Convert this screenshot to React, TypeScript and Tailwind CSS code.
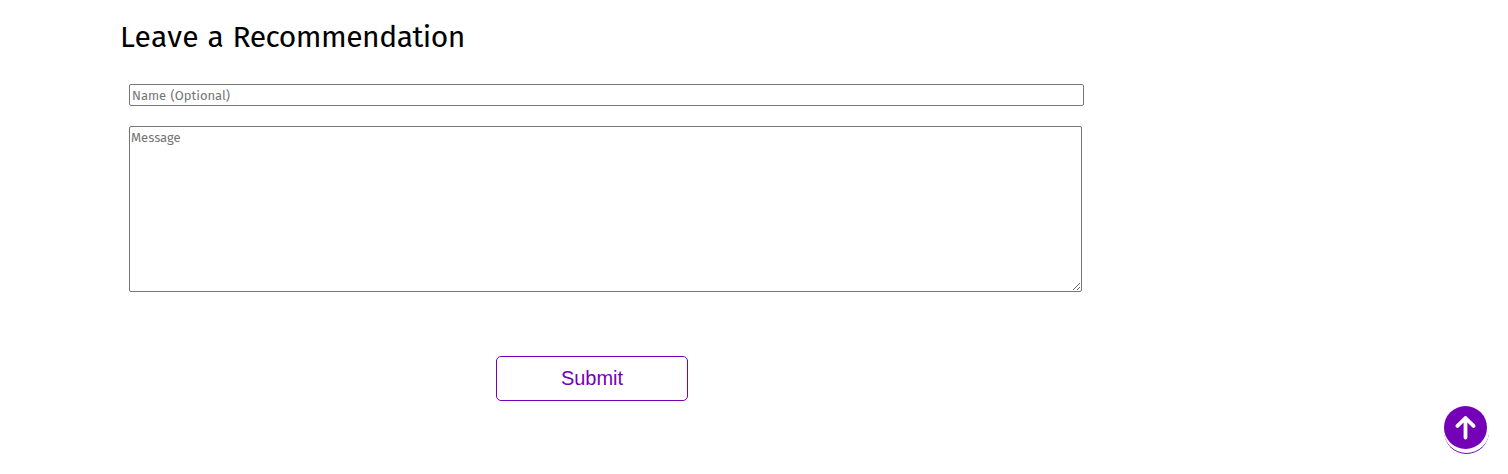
export default function App() {
  return (
    <main className="flex h-[474px] w-[1508px] overflow-hidden bg-white pl-[120px] font-['Trebuchet_MS','Fira_Sans','Open_Sans',sans-serif]">
      <form className="flex w-[964px] flex-col" onSubmit={(e) => e.preventDefault()}>
        <h1 className="mt-[17px] h-10 w-[344px] whitespace-nowrap text-[30px] leading-10 text-black">
          <span className="tracking-[0.4px]">Leave a </span><span className="tracking-[-0.5px]">Recommendation</span>
        </h1>
        <input aria-label="Name" placeholder="Name (Optional)" className="mt-[27px] ml-[9px] h-[22px] w-[955px] rounded-[2px] border border-[#767676] px-[2px] text-[13px] [word-spacing:1px] placeholder:text-[#757575]" />
        <textarea aria-label="Message" placeholder="Message" className="mt-5 ml-[9px] h-[166px] w-[953px] resize rounded-[2px] border border-[#767676] py-[2px] pl-px text-[13px] leading-[18px] placeholder:text-[#757575]" />
        <button className="mt-16 ml-[376px] h-[45px] w-[192px] rounded-[5px] border border-[#7400b8] pb-[2px] font-['Liberation_Sans',sans-serif] text-[20px] text-[#7400b8]">Submit</button>
      </form>
      <button aria-label="Back to top" className="mt-[406px] ml-[360px] flex h-[43px] w-[43px] items-center justify-center rounded-full bg-[#7400b8] shadow-[1px_2.5px_0_1.5px_white,1px_4px_0_1px_#7400b8]">
        <svg width="24" height="24" viewBox="0 0 24 24" fill="none" stroke="white" strokeWidth="3.8" strokeLinecap="round" strokeLinejoin="round"><path d="M11.5 21.5V2M3.5 9.9l8-7.9 8 7.9" /></svg>
      </button>
    </main>
  );
}
